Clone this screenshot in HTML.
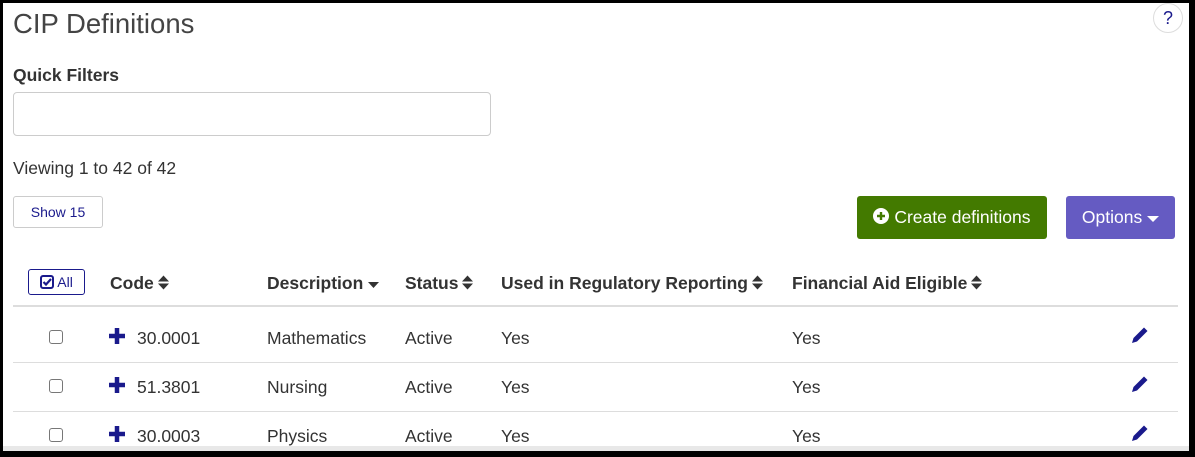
<!DOCTYPE html>
<html><head><style>
*{box-sizing:border-box;margin:0;padding:0}
body{width:1195px;height:457px;background:#000;font-family:"Liberation Sans",sans-serif;color:#333;position:relative;overflow:hidden}
.page{position:absolute;left:3px;top:3px;width:1186px;height:448px;background:#fff;overflow:hidden}
.a{position:absolute}
h1{position:absolute;left:10px;top:5px;font-size:27.5px;font-weight:normal;color:#444}
.help{left:1150px;top:0px;width:30px;height:30px;border:1px solid #ddd;border-radius:50%;text-align:center;line-height:28px;color:#1a1a8c;font-size:18px}
.input{left:10px;top:89px;width:478px;height:44px;border:1px solid #ccc;border-radius:4px}
.btn{border-radius:3px;color:#fff;font-size:17.5px;text-align:center;white-space:nowrap}
.hd{top:270px;font-weight:bold;font-size:17.5px;color:#333;white-space:nowrap}
.row{font-size:17.5px;color:#333}
.line{left:10px;width:1165px;height:1px;background:#ddd}
.cb{width:14px;height:14px;border:1px solid #777;border-radius:3px;left:46px}
.sort{display:inline-block;width:11px;vertical-align:-2px;margin-left:4px}
</style></head><body><div class="page">
<h1>CIP Definitions</h1>
<div class="a help">?</div>
<div class="a" style="left:10px;top:62px;font-weight:bold;font-size:17.5px">Quick Filters</div>
<div class="a input"></div>
<div class="a" style="left:10px;top:155px;font-size:17.5px">Viewing 1 to 42 of 42</div>
<div class="a" style="left:10px;top:193px;width:90px;height:32px;border:1px solid #ccc;border-radius:3px;color:#1a1a8c;font-size:14px;text-align:center;line-height:30px">Show 15</div>
<div class="a btn" style="left:854px;top:193px;width:190px;height:43px;background:#437a00;line-height:43px"><svg width="16" height="16" viewBox="0 0 16 16" style="vertical-align:-1px"><circle cx="8" cy="8" r="8" fill="#fff"/><path d="M8 4v8M4 8h8" stroke="#437a00" stroke-width="2.4"/></svg> Create definitions</div>
<div class="a btn" style="left:1063px;top:193px;width:109px;height:43px;background:#655bc2;line-height:43px">Options <svg width="12" height="8" viewBox="0 0 12 8"><path d="M0 1h12L6 7z" fill="#fff"/></svg></div>
<div class="a" style="left:25px;top:266px;width:57px;height:26px;border:1px solid #1a1a8c;border-radius:3px;color:#1a1a8c;font-size:14px;line-height:24px;text-align:center"><svg width="14" height="14" viewBox="0 0 14 14" style="vertical-align:-2px"><rect x="1" y="1" width="12" height="12" rx="2" fill="none" stroke="#1a1a8c" stroke-width="2"/><path d="M3.5 7l2.5 2.5L11 4" fill="none" stroke="#1a1a8c" stroke-width="2.2"/></svg> All</div>
<div class="a hd" style="left:107px">Code<svg class="sort" height="17" viewBox="0 0 11 17"><path d="M0 7.5L5.5 1.5l5.5 6zM0 9.5l5.5 6 5.5-6z" fill="#333"/></svg></div>
<div class="a hd" style="left:264px">Description <svg width="11" height="8" viewBox="0 0 11 8"><path d="M0 1h11L5.5 7z" fill="#333"/></svg></div>
<div class="a hd" style="left:402px">Status<svg class="sort" height="17" viewBox="0 0 11 17"><path d="M0 7.5L5.5 1.5l5.5 6zM0 9.5l5.5 6 5.5-6z" fill="#333"/></svg></div>
<div class="a hd" style="left:498px">Used in Regulatory Reporting<svg class="sort" height="17" viewBox="0 0 11 17"><path d="M0 7.5L5.5 1.5l5.5 6zM0 9.5l5.5 6 5.5-6z" fill="#333"/></svg></div>
<div class="a hd" style="left:789px">Financial Aid Eligible<svg class="sort" height="17" viewBox="0 0 11 17"><path d="M0 7.5L5.5 1.5l5.5 6zM0 9.5l5.5 6 5.5-6z" fill="#333"/></svg></div>
<div class="a line" style="top:302px;height:2px"></div>
<div class="a line" style="top:359px"></div>
<div class="a line" style="top:408px"></div>
<div class="a" style="left:0;top:443px;width:1186px;height:5px;background:#e8e8e8"></div>

<div class="a cb" style="top:327px"></div>
<div class="a cb" style="top:376px"></div>
<div class="a cb" style="top:425px"></div>

<svg class="a" style="left:105px;top:324px" width="18" height="18" viewBox="0 0 18 18"><path d="M9 1v16M1 9h16" stroke="#1a1a8c" stroke-width="4.5"/></svg>
<svg class="a" style="left:105px;top:373px" width="18" height="18" viewBox="0 0 18 18"><path d="M9 1v16M1 9h16" stroke="#1a1a8c" stroke-width="4.5"/></svg>
<svg class="a" style="left:105px;top:422px" width="18" height="18" viewBox="0 0 18 18"><path d="M9 1v16M1 9h16" stroke="#1a1a8c" stroke-width="4.5"/></svg>

<div class="a row" style="left:134px;top:325px">30.0001</div><div class="a row" style="left:264px;top:325px">Mathematics</div><div class="a row" style="left:402px;top:325px">Active</div><div class="a row" style="left:498px;top:325px">Yes</div><div class="a row" style="left:789px;top:325px">Yes</div>
<div class="a row" style="left:134px;top:374px">51.3801</div><div class="a row" style="left:264px;top:374px">Nursing</div><div class="a row" style="left:402px;top:374px">Active</div><div class="a row" style="left:498px;top:374px">Yes</div><div class="a row" style="left:789px;top:374px">Yes</div>
<div class="a row" style="left:134px;top:423px">30.0003</div><div class="a row" style="left:264px;top:423px">Physics</div><div class="a row" style="left:402px;top:423px">Active</div><div class="a row" style="left:498px;top:423px">Yes</div><div class="a row" style="left:789px;top:423px">Yes</div>

<svg class="a" style="left:1127px;top:322px" width="20" height="20" viewBox="0 0 20 20"><path d="M2 18l1.5-5L14 2.5l3.5 3.5L7 16.5z" fill="#1a1a8c"/></svg>
<svg class="a" style="left:1127px;top:371px" width="20" height="20" viewBox="0 0 20 20"><path d="M2 18l1.5-5L14 2.5l3.5 3.5L7 16.5z" fill="#1a1a8c"/></svg>
<svg class="a" style="left:1127px;top:420px" width="20" height="20" viewBox="0 0 20 20"><path d="M2 18l1.5-5L14 2.5l3.5 3.5L7 16.5z" fill="#1a1a8c"/></svg>
</div></body></html>
